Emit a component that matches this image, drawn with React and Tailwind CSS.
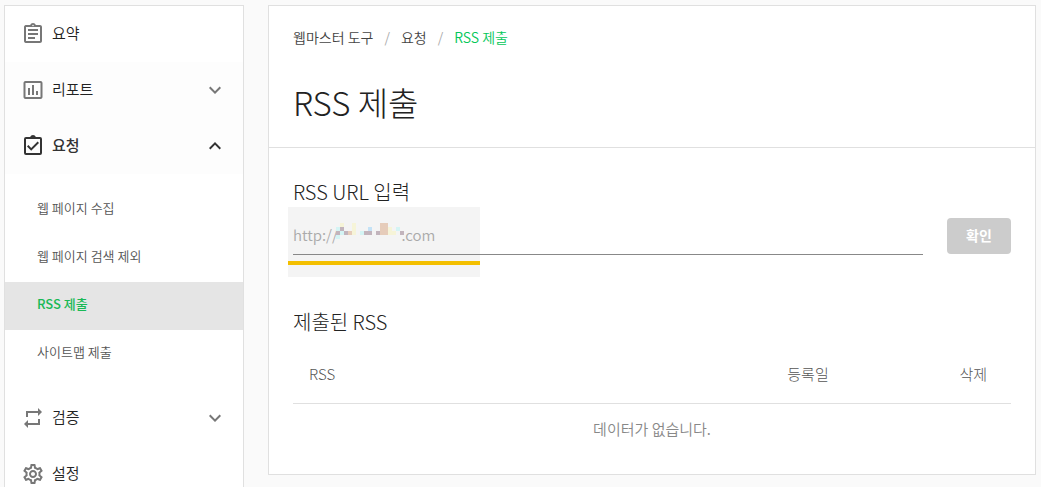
import React, { useState } from 'react';
import {
    MdOutlineAssignment,
    MdInsertChartOutlined,
    MdRepeat,
    MdOutlineSettings,
    MdExpandMore,
    MdExpandLess,
} from 'react-icons/md';

const ClipboardCheckIcon = ({ className }) => (
    <svg viewBox="0 0 24 24" fill="currentColor" className={className} aria-hidden="true">
        <path d="M19 3h-4.2C14.4 1.8 13.3 1 12 1s-2.4.8-2.8 2H5a2 2 0 0 0-2 2v14a2 2 0 0 0 2 2h14a2 2 0 0 0 2-2V5a2 2 0 0 0-2-2Zm0 16H5V5h14v14ZM18 8.9l-1.4-1.4-6.4 6.4-2.8-2.8L6 12.5l4.2 4.2L18 8.9Z" />
    </svg>
);

const requestPages = [
    { label: '웹 페이지 수집' },
    { label: '웹 페이지 검색 제외' },
    { label: 'RSS 제출', active: true },
    { label: '사이트맵 제출' },
];

// Pixelated domain name, one string per row of 4px cells
const mosaicColors = {
    y: '#f6f4d8',
    c: '#d4f4f4',
    b: '#c4e2f6',
    m: '#c2b4bc',
    t: '#e6ccba',
};
const mosaicRows = [
    '.y..y......tt....',
    'cm..y...b..tty.c.',
    'mcmty.cmm.mttyy.m',
    'c................',
];

const MenuItem = ({ icon: Icon, label, open, expandable, className = '' }) => (
    <button
        type="button"
        aria-expanded={expandable ? Boolean(open) : undefined}
        className={`flex h-14 w-full items-center px-4 text-left ${className}`}
    >
        <Icon className={`size-6 ${open ? 'text-[#333]' : 'text-[#777]'}`} />
        <span className={`ml-[7px] flex-1 pb-0.5 text-[15px] ${open ? 'font-medium text-[#333]' : 'font-[350]'}`}>{label}</span>
        {expandable && (open
            ? <MdExpandLess className="size-6 text-[#333]" />
            : <MdExpandMore className="size-6 text-[#777]" />)}
    </button>
);

const Mosaic = ({ className }) => (
    <svg viewBox="0 0 68 16" shapeRendering="crispEdges" className={className} aria-hidden="true">
        {mosaicRows.map((row, y) =>
            [...row].map((cell, x) => cell !== '.' && (
                <rect key={`${x}-${y}`} x={x * 4} y={y * 4} width="4" height="4" fill={mosaicColors[cell]} />
            ))
        )}
    </svg>
);

const App = () => {
    const [url, setUrl] = useState('');

    return (
        <div className="flex min-h-screen items-start gap-6 bg-[#fafafa] py-[5px] pl-1 pr-[5px] font-['Noto_Sans_CJK_KR',sans-serif] text-[#222]">
            <nav className="w-60 shrink-0 border border-[#e0e0e0] bg-white">
                <MenuItem icon={MdOutlineAssignment} label="요약" />
                <MenuItem icon={MdInsertChartOutlined} label="리포트" expandable className="bg-[#fdfdfd]" />
                <MenuItem icon={ClipboardCheckIcon} label="요청" expandable open className="bg-[#fdfdfd]" />
                <ul className="py-3">
                    {requestPages.map((page) => (
                        <li key={page.label}>
                            <a
                                href="#"
                                className={`flex h-12 items-center px-8 pb-1 text-[13px] ${page.active ? 'bg-[#e5e5e5] font-medium text-[#19b955]' : 'font-[350] text-[#555]'}`}
                            >
                                {page.label}
                            </a>
                        </li>
                    ))}
                </ul>
                <MenuItem icon={MdRepeat} label="검증" expandable />
                <MenuItem icon={MdOutlineSettings} label="설정" />
            </nav>

            <main className="min-w-0 flex-1 border border-[#e0e0e0] bg-white">
                <header className="border-b border-[#e0e0e0] px-6 py-5">
                    <div className="flex gap-[11px] text-sm font-[350] leading-[22px] text-[#444]">
                        <a href="#">웹마스터 도구</a>
                        <span className="text-[#aaa]">/</span>
                        <a href="#">요청</a>
                        <span className="text-[#aaa]">/</span>
                        <a href="#" className="text-[#03c75a]">RSS 제출</a>
                    </div>
                    <h1 className="mt-[30px] text-[33px] font-light leading-[49px]">RSS 제출</h1>
                </header>

                <section className="px-6 pb-[19px] pt-8">
                    <label htmlFor="rss-url" className="block text-xl font-light leading-6">RSS URL 입력</label>
                    <form className="mt-3.5 flex items-start gap-6" onSubmit={(e) => e.preventDefault()}>
                        <div className="relative isolate flex-1">
                            <div className="absolute -left-[5px] -top-[11px] -z-10 h-[70px] w-48 bg-[#f4f4f4]" />
                            <input
                                id="rss-url"
                                value={url}
                                onChange={(e) => setUrl(e.target.value)}
                                placeholder="http://                   .com"
                                className="block h-[37px] w-full border-b border-[#888] pb-1 text-[15px] font-[350] outline-none placeholder:text-[#aaa]"
                            />
                            <Mosaic className="absolute left-[43px] top-[5px] h-4 w-17" />
                            <div className="absolute -left-[5px] top-[43px] h-1 w-48 bg-[#f3bf00]" />
                        </div>
                        <button type="submit" className="h-9 w-16 rounded bg-[#ccc] pb-0.5 text-sm font-bold text-white">확인</button>
                    </form>

                    <h2 className="mt-[55px] text-xl font-light leading-6">제출된 RSS</h2>
                    <table className="mt-3 w-full table-fixed text-[15px] text-[#555]">
                        <thead>
                            <tr className="h-[57px] border-b border-[#e0e0e0]">
                                <th className="px-4 text-left font-light">RSS</th>
                                <th className="w-36 font-light">등록일</th>
                                <th className="w-[131px] px-6 text-right font-light">삭제</th>
                            </tr>
                        </thead>
                        <tbody>
                            <tr className="h-13">
                                <td colSpan={3} className="text-center font-[350] text-[#888]">데이터가 없습니다.</td>
                            </tr>
                        </tbody>
                    </table>
                </section>
            </main>
        </div>
    );
};

export default App;
